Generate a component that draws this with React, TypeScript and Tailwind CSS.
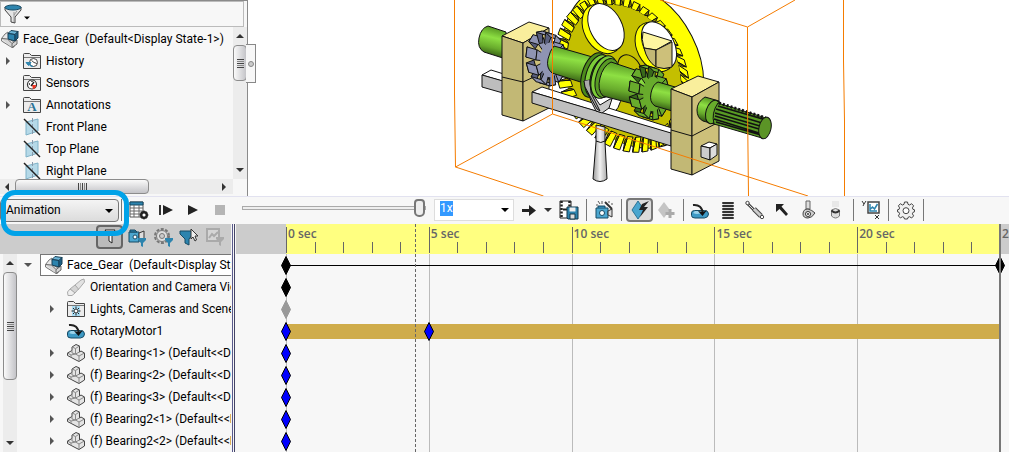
import type { ReactNode } from 'react';

interface TreeItem {
  label: string;
  icon: ReactNode;
  expandable?: boolean;
}

function AssemblyIcon() {
  return (
    <svg width="18" height="18" viewBox="0 0 18 18" className="shrink-0" strokeLinejoin="round">
      <path d="M.5 8.500 4 4l3-2 1 7 5 3v5l-2 .500L.5 11z" fill="#e8e8e8" stroke="#777" />
      <path d="m.5 8.500 6 .500 4.500 4.500v4M11 13.500l5-3.500v4l-5 3.500" fill="#d5d5d5" stroke="#666" />
      <path d="m7 3.500 3-3 7 1-3 3z" fill="#6cb4d6" stroke="#173f56" />
      <path d="M7 3.500l7 1V11l-7-2z" fill="#2d84ae" stroke="#173f56" />
      <path d="m14 4.500 3-3V8l-3 3z" fill="#1c5f84" stroke="#173f56" />
    </svg>
  );
}

function PartIcon() {
  return (
    <svg width="18" height="18" viewBox="0 0 18 18" className="shrink-0" fill="#e4e4e4" stroke="#444" strokeLinejoin="round">
      <path d="M.5 9 5 6.500V3L9 .5 12.500 2v6L14 7l3.500 2v5L12 17.500l-3-1.500-8.500-4.500z" />
      <path d="m5 3 3.500 1.500 4-2.500M8.500 4.500V10L12 12l5.500-3M8.500 10l4-2M5 6.500V9l3.500 1M.5 9l3.500 2v2.500M12 12v5.500M4 11l4.500-1" fill="none" stroke="#888" />
    </svg>
  );
}

function FolderIcon({ children }: { children: ReactNode }) {
  return (
    <svg width="18" height="18" viewBox="0 0 18 18" className="shrink-0">
      <path d="M.5 16.500v-14q0-1 1-1h5l2 2h9v13z" fill="#ececec" stroke="#444" />
      <path d="M1 5.500h16" stroke="#777" />
      {children}
    </svg>
  );
}

function HistoryIcon() {
  return (
    <FolderIcon>
      <circle cx="10.500" cy="10.500" r="4" fill="#fff" stroke="#444" />
      <path d="M11 10.500 8.500 8.500M11 10.500l3 1" stroke="#444" />
      <path d="M3 10.500h5l-2.500 3zM5.500 11Q7 15 10 14.500" fill="#2d84ae" stroke="#2d84ae" />
    </FolderIcon>
  );
}

function SensorsIcon() {
  return (
    <FolderIcon>
      <circle cx="9" cy="10.500" r="4.500" fill="#fff" stroke="#333" strokeWidth="1.200" />
      <path d="M9 11h4a4 4 0 0 1-3 4z" fill="#e32" />
      <path d="m8 12 3-4M6 10h1M9 7v1" stroke="#222" strokeWidth="1.400" />
    </FolderIcon>
  );
}

function AnnotationsIcon() {
  return (
    <FolderIcon>
      <text x="9" y="15" fontSize="13" fontWeight="700" textAnchor="middle" fill="#2a7397" fontFamily="Liberation Serif, serif">A</text>
    </FolderIcon>
  );
}

function LightsIcon() {
  return (
    <FolderIcon>
      <path d="M5 6h8v10H5z" fill="#a9dcf3" />
      <circle cx="9" cy="11" r="2" fill="#fff" stroke="#222" />
      <path d="M9 6.500v2M9 13.500v2M4.500 11h2M11.500 11h2M6 8l1 1M12 8l-1 1M6 14l1-1M12 14l-1-1" stroke="#222" />
    </FolderIcon>
  );
}

function PlaneIcon() {
  return (
    <svg width="18" height="18" viewBox="0 0 18 18" className="shrink-0">
      <path d="m3 4 12-3v12L3 17z" fill="#b5d9e8" stroke="#7fb2c8" />
      <path d="M9.500 0v18" stroke="#89a" strokeDasharray="4 2" />
      <path d="m1 1 16 16" stroke="#222" strokeWidth="1.500" />
    </svg>
  );
}

function CameraViewIcon() {
  return (
    <svg width="18" height="18" viewBox="0 0 18 18" className="shrink-0" fill="#e2e2e2" stroke="#aaa">
      <path d="m8 7 6-5 3-1 .5 3-6.500 8z" />
      <path d="m3 11 5-4 3.500 4L8 15z" fill="#d4d4d4" />
      <path d="m.5 14 2.500-3 5 4-3 2.500H1z" fill="#eee" />
    </svg>
  );
}

function MotorShape() {
  return (
    <>
      <path d="M.5 11q0-2.500 3-2.500h10q4 0 4 3.500t-4 4H4q-3.500 0-3.500-2.500z" fill="#3d9ac5" stroke="#174a64" />
      <path d="M2 11q4 2 8 0l2-2H4z" fill="#9bd3ea" />
      <path d="M2 3q9-1 10 9" fill="none" stroke="#222" strokeWidth="2" />
      <path d="m7 9 4.500 5L16 8l-4 2z" fill="#111" />
    </>
  );
}

function MotorIcon() {
  return (
    <svg width="18" height="18" viewBox="0 0 18 18" className="shrink-0">
      <MotorShape />
    </svg>
  );
}

function Funnel({ x = 0, y = 0, fill = '#2d84ae' }: { x?: number; y?: number; fill?: string }) {
  return <path transform={`translate(${x} ${y})`} d="M0 0h8v2L5 5v4L3 8V5L0 2z" fill={fill} />;
}

const FEATURES: TreeItem[] = [
  { label: 'History', icon: <HistoryIcon />, expandable: true },
  { label: 'Sensors', icon: <SensorsIcon /> },
  { label: 'Annotations', icon: <AnnotationsIcon />, expandable: true },
  { label: 'Front Plane', icon: <PlaneIcon /> },
  { label: 'Top Plane', icon: <PlaneIcon /> },
  { label: 'Right Plane', icon: <PlaneIcon /> },
];

const MOTION_ITEMS: TreeItem[] = [
  { label: 'Orientation and Camera Views', icon: <CameraViewIcon /> },
  { label: 'Lights, Cameras and Scene', icon: <LightsIcon />, expandable: true },
  { label: 'RotaryMotor1', icon: <MotorIcon /> },
  { label: '(f) Bearing<1> (Default<<Default>', icon: <PartIcon />, expandable: true },
  { label: '(f) Bearing<2> (Default<<Default>', icon: <PartIcon />, expandable: true },
  { label: '(f) Bearing<3> (Default<<Default>', icon: <PartIcon />, expandable: true },
  { label: '(f) Bearing2<1> (Default<<Default>', icon: <PartIcon />, expandable: true },
  { label: '(f) Bearing2<2> (Default<<Default>', icon: <PartIcon />, expandable: true },
];

function Arrow({ dir, className = '' }: { dir: 'up' | 'down' | 'left' | 'right'; className?: string }) {
  const paths = { up: 'M0 6 4 2l4 4z', down: 'M0 2h8L4 6z', left: 'M6 0v8L2 4z', right: 'M2 0v8l4-4z' };
  return (
    <svg width="8" height="8" viewBox="0 0 8 8" className={`shrink-0 ${className}`}>
      <path d={paths[dir]} fill="currentColor" />
    </svg>
  );
}

function TreeRow({ item }: { item: TreeItem }) {
  return (
    <li className="flex h-[22px] items-center whitespace-nowrap">
      <span className="flex w-[19px] shrink-0 text-[#555]">{item.expandable && <Arrow dir="right" />}</span>
      {item.icon}
      <span className="ml-[5px]">{item.label}</span>
    </li>
  );
}

function VScrollbar({ thumb }: { thumb: string }) {
  return (
    <div aria-hidden="true" className="flex w-[14px] shrink-0 flex-col items-center bg-[#ececec] text-[#333]">
      <Arrow dir="up" className="my-[5px]" />
      <div className={`flex w-full flex-col items-center justify-center gap-px rounded-sm border border-[#8c8c8c] bg-linear-to-r from-[#fafafa] to-[#c4c4c8] ${thumb}`}>
        <span className="h-px w-[7px] bg-[#444]" />
        <span className="h-px w-[7px] bg-[#888]" />
        <span className="h-px w-[7px] bg-[#444]" />
        <span className="h-px w-[7px] bg-[#888]" />
        <span className="h-px w-[7px] bg-[#444]" />
      </div>
      <Arrow dir="down" className="mt-auto mb-[5px]" />
    </div>
  );
}

function FeatureTree() {
  return (
    <aside className="relative flex w-[248px] shrink-0 flex-col border-t border-r border-[#8a8a8a] bg-[#f7f7f7]">
      <div className="mr-[3px] flex h-[26px] items-center border border-[#bbb] pl-[3px]">
        <button type="button" aria-label="Filter" className="flex items-center gap-px">
          <svg width="18" height="20" viewBox="0 0 18 20">
            <path d="M1 3v3l6 7v5l4 1v-6l6-7V3z" fill="#e5e5e5" stroke="#444" />
            <ellipse cx="9" cy="3.500" rx="8" ry="2.500" fill="#2d84ae" stroke="#174a64" />
            <path d="M10 8v10M13 7l-3 4" stroke="#999" />
          </svg>
          <Arrow dir="down" className="mt-2 scale-75" />
        </button>
      </div>
      <div className="flex h-[152px] overflow-hidden">
        <div className="min-w-0 flex-1 overflow-hidden pt-px">
          <div className="flex h-[22px] items-center gap-1 whitespace-nowrap pl-px">
            <AssemblyIcon />
            <span className="whitespace-pre">Face_Gear  (Default&lt;Display State-1&gt;)</span>
          </div>
          <ul className="pl-1">
            {FEATURES.map((f) => (
              <TreeRow key={f.label} item={f} />
            ))}
          </ul>
        </div>
        <VScrollbar thumb="h-[36px]" />
      </div>
      <div aria-hidden="true" className="mr-[14px] flex h-[15px] items-center bg-[#ececec] text-[#333]">
        <Arrow dir="left" className="mx-[3px]" />
        <div className="ml-px flex h-full w-[134px] items-center justify-center gap-px rounded-sm border border-[#8c8c8c] bg-linear-to-b from-[#fafafa] to-[#c4c4c8]">
          <span className="h-[7px] w-px bg-[#444]" />
          <span className="h-[7px] w-px bg-[#888]" />
          <span className="h-[7px] w-px bg-[#444]" />
          <span className="h-[7px] w-px bg-[#888]" />
          <span className="h-[7px] w-px bg-[#444]" />
        </div>
        <Arrow dir="right" className="mr-[5px] ml-auto" />
      </div>
      <button type="button" aria-label="Collapse panel" className="absolute top-[43px] -right-[9px] flex h-[39px] w-[10px] items-center justify-center border border-l-0 border-[#888] bg-[#f7f7f7]">
        <span className="size-[6px] rounded-full border border-[#888] bg-[#ccc]" />
      </button>
    </aside>
  );
}

// point on the tilted ellipse that the gear's circles project to
function ring(cx: number, cy: number, s: number, t: number) {
  const u = 91 * s * Math.cos(t);
  const v = 70 * s * Math.sin(t);
  return `${(cx + 0.456 * u - 0.89 * v).toFixed(1)},${(cy + 0.89 * u + 0.456 * v).toFixed(1)}`;
}

function FaceGear() {
  const count = 44;
  const step = (Math.PI * 2) / count;
  return (
    <g stroke="#111" strokeLinejoin="round">
      <ellipse cx="633" cy="66" rx="86" ry="66" transform="rotate(62.9 633 66)" fill="#ffff00" />
      <ellipse cx="624" cy="72" rx="76" ry="58" transform="rotate(62.9 624 72)" fill="#c4bf00" stroke="none" />
      {Array.from({ length: count }, (_, i) => {
        const t = i * step;
        return (
          <g key={i}>
            <polygon points={[ring(624, 71, 0.76, t), ring(622, 74, 0.9, t + 0.05), ring(622, 74, 0.9, t + 0.05 + step * 0.65), ring(624, 71, 0.76, t + step * 0.65)].join(' ')} fill="#ffff00" />
            <polygon points={[ring(624, 71, 0.76, t + step * 0.65), ring(622, 74, 0.9, t + 0.05 + step * 0.65), ring(624, 72, 0.8, t + step)].join(' ')} fill="#8f8b00" />
          </g>
        );
      })}
      <ellipse cx="625" cy="70" rx="68" ry="52" transform="rotate(62.9 625 70)" fill="#c4bf00" stroke="none" />
      <ellipse cx="602" cy="29" rx="26" ry="18" transform="rotate(62.9 602 29)" fill="#ffff00" />
      <ellipse cx="606" cy="27" rx="25" ry="16" transform="rotate(62.9 606 27)" fill="#fff" />
      <ellipse cx="655" cy="47" rx="26" ry="18" transform="rotate(62.9 655 47)" fill="#ffff00" />
      <ellipse cx="659" cy="45" rx="25" ry="15" transform="rotate(62.9 659 45)" fill="#fff" />
      <path d="m643 32 29 9-16 9-12-2q-3-9-1-16z" fill="#fdf5a0" />
      <path d="m644 48 12 2v17q-9-6-12-19z" fill="#c2b875" />
      <path d="m656 50 16-8v25q-8 3-16 0z" fill="#cdc07a" />
      <ellipse cx="630" cy="70" rx="16" ry="11" transform="rotate(62.9 630 70)" fill="none" />
      <path d="M586 75q-3 20 14 36l10 5q10-6 12-22z" fill="#fff" />
    </g>
  );
}

function Pinion({ cx, cy, r, fill, dark }: { cx: number; cy: number; r: number; fill: string; dark: string }) {
  const teeth = 10;
  return (
    <g stroke="#111" strokeLinejoin="round">
      {Array.from({ length: teeth }, (_, i) => {
        const t = (i * Math.PI * 2) / teeth + 0.2;
        const at = (radius: number, d: number, dx: number, dy: number) =>
          `${(cx + dx + radius * 0.58 * Math.cos(t + d)).toFixed(1)},${(cy + dy + radius * Math.sin(t + d)).toFixed(1)}`;
        return (
          <g key={i}>
            <polygon points={[at(r * 0.55, -0.22, -5, -2), at(r, -0.2, -6, -2), at(r, 0.2, -6, -2), at(r * 0.55, 0.22, -5, -2)].join(' ')} fill={dark} />
            <polygon points={[at(r, -0.2, -6, -2), at(r, 0.2, -6, -2), at(r, 0.2, 4, 1), at(r, -0.2, 4, 1)].join(' ')} fill={fill} />
            <polygon points={[at(r * 0.5, -0.26, 4, 1), at(r, -0.2, 4, 1), at(r, 0.2, 4, 1), at(r * 0.5, 0.26, 4, 1)].join(' ')} fill={fill} />
          </g>
        );
      })}
      <ellipse cx={cx + 3} cy={cy + 1} rx={r * 0.38} ry={r * 0.66} fill={fill} stroke="none" />
    </g>
  );
}

function ModelView() {
  return (
    <svg viewBox="248 0 761 196" preserveAspectRatio="xMidYMid meet" role="img" aria-label="Face gear assembly" className="min-w-0 flex-1 bg-white">
      <defs>
        <linearGradient id="shaftEnd" x1="0.6" y1="0" x2="0.4" y2="1">
          <stop offset="0" stopColor="#4d8b1c" />
          <stop offset="0.35" stopColor="#8ee043" />
          <stop offset="0.65" stopColor="#68ab2c" />
          <stop offset="1" stopColor="#1f3a0a" />
        </linearGradient>
        <linearGradient id="post">
          <stop offset="0" stopColor="#999" />
          <stop offset="0.5" stopColor="#f2f2f2" />
          <stop offset="1" stopColor="#aaa" />
        </linearGradient>
      </defs>

      <FaceGear />

      <g stroke="#111" strokeLinejoin="round">
        <path d="m482 75 9-5 16 5-5 6z" fill="#fff" />
        <path d="m482 75 21 6v12l-21-6z" fill="#bdbdbd" />
        <path d="m488 26 18 6v27l-22-7q-7-4-5-14t9-12z" fill="url(#shaftEnd)" />
        <path d="m502 36 27-14 20 6-26 15z" fill="#f9ee9c" />
        <path d="m502 36 21 7v78l-21-6z" fill="#c2b875" />
        <path d="m523 43 26-15v80l-26 13z" fill="#cdc07a" />
        <path d="m502 77 21 5 26-12" fill="none" />
      </g>

      <Pinion cx={547} cy={59} r={26} fill="#8f94b3" dark="#595e7c" />

      <g stroke="#111" strokeLinejoin="round">
        <path d="m532 92 10-5 130 41v6z" fill="#fff" />
        <path d="m532 92 139 41v13L532 103z" fill="#bfbfbf" />
        <path d="m554 46 42 12-6 27-38-12q-6-5-4-14t6-13z" fill="url(#shaftEnd)" />
        <path d="M596 125v17l-3 37q7 5 14 0l-2-37v-15z" fill="url(#post)" />
        <path d="M596 141q5 3 9 0" fill="none" />
        <ellipse cx="594" cy="75" rx="12" ry="23" transform="rotate(17 594 75)" fill="#4d8b1c" />
        <ellipse cx="598" cy="76" rx="12" ry="22" transform="rotate(17 598 76)" fill="#7ccc38" />
        <path d="m584 81 6-1 2 13 8 12 10-6 2 0-3 9-7 5-6-2-5-10z" fill="#c9c9c9" />
        <path d="m584 81 1 6 12 22 3 2-9-18-1-13" fill="#aaa" />
        <ellipse cx="601" cy="76" rx="10" ry="19" transform="rotate(17 601 76)" fill="#2f5c10" />
        <ellipse cx="604" cy="77" rx="12" ry="22" transform="rotate(17 604 77)" fill="#7ccc38" />
        <ellipse cx="607" cy="78" rx="11" ry="20" transform="rotate(17 607 78)" fill="#589a24" />
        <path d="m611 62 42 14-8 31-42-11q-6-6-3-18t11-16z" fill="url(#shaftEnd)" />
      </g>

      <Pinion cx={650} cy={93} r={26} fill="#68ab2c" dark="#39691a" />

      <g stroke="#111" strokeLinejoin="round">
        <path d="m658 82 24 7-3 24-24-7q-6-4-4-13t7-11z" fill="url(#shaftEnd)" />
        <path d="m671 89 27-13 21 6-27 15z" fill="#f9ee9c" />
        <path d="m671 89 21 8v78l-21-6z" fill="#c2b875" />
        <path d="m692 97 27-15v79l-27 14z" fill="#cdc07a" />
        <path d="m671 130 21 6 27-14" fill="none" />
        <path d="m701 146 8-4 8 2-7 4z" fill="#fff" />
        <path d="m701 146 9 2v12l-9-3z" fill="#ccc" />
        <path d="m710 148 7-4v11l-7 5z" fill="#ddd" />
        <path d="m705 97 14 4-5 23-11-3q-6-3-6-11t8-13z" fill="url(#shaftEnd)" />
        <ellipse cx="713" cy="112" rx="7" ry="12" transform="rotate(17 713 112)" fill="#68ab2c" />
        <path d="m718 103 48 15-4 20-48-14q-3-11 4-21z" fill="#589a24" />
        <path d="m718 106 48 14M716 109l46 14M715 113l45 13M715 116l44 13M714 119l45 14M716 122l45 13" fill="none" strokeWidth="1.600" />
        <path d="m719 103 47 15" strokeWidth="3" strokeDasharray="2 2" />
        <ellipse cx="765" cy="128" rx="6" ry="11" transform="rotate(12 765 128)" fill="#5b9426" />
      </g>

      <g fill="none" stroke="#f57c00">
        <path d="M454.500 0v94l1 73 97-53V0M455.500 167l88 29M552.500 114 808 196M660 0l87.500 27L795 0M747.500 27v80l1 89M843.500 0v61l1 60v75" />
      </g>
    </svg>
  );
}

function ToolButton({ label, children }: { label: string; children: ReactNode }) {
  return (
    <button type="button" aria-label={label} className="flex h-[25px] w-[26px] shrink-0 items-center justify-center">
      <svg width="20" height="20" viewBox="0 0 20 20">
        {children}
      </svg>
    </button>
  );
}

function Separator() {
  return <span className="mx-1 h-[22px] w-px shrink-0 bg-[#777]" />;
}

function MotionToolbar() {
  return (
    <div className="flex h-7 items-center border-t border-[#e2e2f0] bg-[#f7f7f7] pb-px">
      <div className="relative w-[119px] shrink-0">
        <select aria-label="Study type" className="h-[23px] w-full appearance-none rounded-sm border border-[#777] bg-linear-to-b from-[#f4f4f4] to-[#dcdcdc] pl-[5px]">
          <option>Animation</option>
        </select>
        <Arrow dir="down" className="pointer-events-none absolute top-2 right-[6px]" />
      </div>
      <span className="ml-[2px] h-[22px] w-px shrink-0 bg-[#777]" />
      <div className="ml-1 flex">
        <ToolButton label="Calculate">
          <path d="M1 2h13v15H1z" fill="#fff" stroke="#555" />
          <path d="M1 2h13v3H1z" fill="#2d84ae" stroke="#174a64" />
          <path d="M1 8h13M1 11h13M1 14h13M5 5v12M10 5v12" stroke="#666" />
          <circle cx="15" cy="15" r="3" fill="#f7f7f7" stroke="#222" strokeWidth="2" />
          <path d="M15 10.500v9M10.500 15h9M12 12l6 6M18 12l-6 6" stroke="#222" strokeWidth="1.200" />
          <circle cx="15" cy="15" r="1.500" fill="#fff" />
        </ToolButton>
        <ToolButton label="Play from start">
          <path d="M5 5v10" stroke="#333" strokeWidth="2" />
          <path d="m8 5 10 5-10 5z" fill="#222" />
        </ToolButton>
        <ToolButton label="Play">
          <path d="m7 5 10 5-10 5z" fill="#222" />
        </ToolButton>
        <ToolButton label="Stop">
          <path d="M8 5h10v10H8z" fill="#b5b5b5" />
        </ToolButton>
      </div>
      <input
        type="range"
        aria-label="Playback position"
        defaultValue={100}
        className="mr-2 mb-[5px] ml-3 h-[18px] w-[184px] shrink-0 appearance-none bg-transparent [&::-webkit-slider-runnable-track]:h-[4px] [&::-webkit-slider-runnable-track]:border [&::-webkit-slider-runnable-track]:border-[#aaa] [&::-webkit-slider-runnable-track]:bg-[#eee] [&::-webkit-slider-thumb]:-mt-2 [&::-webkit-slider-thumb]:h-[18px] [&::-webkit-slider-thumb]:w-[11px] [&::-webkit-slider-thumb]:appearance-none [&::-webkit-slider-thumb]:rounded-t-sm [&::-webkit-slider-thumb]:rounded-b-[5px] [&::-webkit-slider-thumb]:border-2 [&::-webkit-slider-thumb]:border-[#777] [&::-webkit-slider-thumb]:bg-[#eee]"
      />
      <div className="flex h-[22px] w-[80px] shrink-0 items-center border border-[#ddd] bg-white pr-1 pl-[5px]">
        <input aria-label="Playback speed" defaultValue="1x" className="mb-1 h-[15px] w-[13px] bg-[#3399ff] text-white outline-none" />
        <button type="button" aria-label="Speed list" className="ml-auto">
          <Arrow dir="down" />
        </button>
      </div>
      <div className="ml-[2px] flex items-center">
        <ToolButton label="Playback mode">
          <path d="M3 9h7V5l7 5.500-7 5.500v-4H3z" fill="#222" />
        </ToolButton>
        <Arrow dir="down" className="mr-1 ml-[2px] text-[#333]" />
        <ToolButton label="Save animation">
          <path d="M1 1h11v17H1z" fill="#fff" stroke="#222" />
          <path d="M2.500 1v17M10.500 1v17" stroke="#222" strokeWidth="2.500" strokeDasharray="2 1.500" />
          <path d="M4 9.500h5" stroke="#222" strokeWidth="2" />
          <path d="M8 7h11v12H9l-1-1z" fill="#2d84ae" stroke="#17384a" />
          <path d="M10.500 7.500h6v4h-6z" fill="#eee" />
          <path d="M11 14h5v5h-5z" fill="#ddd" stroke="#17384a" />
        </ToolButton>
        <Separator />
        <ToolButton label="Animation wizard">
          <path d="M2 8h12v10H2z" fill="#4ba6cf" stroke="#174a64" />
          <path d="m14 11 4-2v8l-4-2z" fill="#ddd" stroke="#333" />
          <path d="M4 8V6h7v2" fill="#2d84ae" stroke="#174a64" />
          <circle cx="8" cy="13" r="2.500" fill="#fff" stroke="#174a64" />
          <path d="m11 2 7 7" stroke="#333" strokeWidth="2" />
          <path d="M4 1l2 3M8 1v3M15 1v2M2 5h2M17 4h2" stroke="#555" />
        </ToolButton>
        <Separator />
        <button type="button" aria-label="Auto key" aria-pressed="true" className="flex h-6 w-[27px] shrink-0 items-center justify-center rounded-sm border-2 border-[#777] bg-[#dcdcdc]">
          <svg width="20" height="20" viewBox="0 0 20 20">
            <path d="m8 1 6 9-6 9-6-9z" fill="#4ba6cf" stroke="#2d7396" />
            <path d="m19 1-7 3-3 6h4l-3 7 8-10h-4z" fill="#222" />
          </svg>
        </button>
        <ToolButton label="Add key">
          <path d="m8 2 6 8-6 8-6-8z" fill="#c4c4c4" />
          <path d="M14 9v9M9.500 13.500h9" stroke="#aaa" strokeWidth="3" />
        </ToolButton>
        <Separator />
      </div>
      <div className="flex items-center gap-px">
        <ToolButton label="Motor">
          <g transform="translate(0 2)">
            <MotorShape />
          </g>
        </ToolButton>
        <ToolButton label="Spring">
          <path d="M5 3h10M5 6h10M5 9h10M5 12h10M5 15h10M5 18h10" stroke="#333" strokeWidth="2" strokeLinecap="round" />
          <path d="M5 4.500h10M5 7.500h10M5 10.500h10M5 13.500h10M5 16.500h10" stroke="#ddd" />
        </ToolButton>
        <ToolButton label="Damper">
          <path d="m2 3 8 8" stroke="#444" strokeWidth="3" />
          <path d="m3 4 6 6" stroke="#ddd" />
          <path d="m9 9 7 7" stroke="#444" strokeWidth="5" />
          <path d="m9 9 7 7" stroke="#ccc" strokeWidth="3" />
          <circle cx="2.500" cy="3" r="1.700" fill="#fff" stroke="#444" />
          <circle cx="17" cy="17" r="1.700" fill="#fff" stroke="#444" />
        </ToolButton>
        <ToolButton label="Force">
          <path d="M4 4h8L9.500 6.500 16 14l-2 2-6.500-7L4 12z" fill="#222" />
        </ToolButton>
        <ToolButton label="Contact">
          <path d="M7 1h4v8H7z" fill="#ddd" stroke="#666" />
          <path d="M4 14q0-5 5-5 4 1 7 4-3 5-7 5-5 0-5-4z" fill="#ccc" stroke="#444" />
          <circle cx="9" cy="14" r="2.500" fill="#fff" stroke="#333" />
          <circle cx="9" cy="14" r="1" fill="#333" />
        </ToolButton>
        <ToolButton label="Gravity">
          <path d="M6 1h7v6H6z" fill="#e8e8e8" />
          <path d="M5.500 10q4-3 8 0v6q-4 4-8 0z" fill="#ddd" stroke="#777" />
          <path d="M5.500 10.500q4 4 8 0" fill="none" stroke="#333" strokeWidth="2" />
        </ToolButton>
      </div>
      <Separator />
      <ToolButton label="Results and plots">
        <path d="M7 2h11v11H7z" fill="#fff" stroke="#444" strokeWidth="1.500" />
        <path d="M9 4v7h7M9.500 9l2-2 2 2 3-5" fill="none" stroke="#2d84ae" strokeWidth="1.500" />
        <path d="m1 1 2 3 2-3M3 4 2 6M14 15l4 4M18 15l-4 4" fill="none" stroke="#333" />
      </ToolButton>
      <Separator />
      <ToolButton label="Motion study properties">
        <path d="M8.500 2h3l.5 2.300 1.600.7 2-1.300 2 2.100L16.400 7.900l.6 1.500 1.500.400v2l-1.500.500-.6 1.500 1.200 2.100-2 2.100-2-1.300-1.600.7-.5 1.600h-3L8 17.400l-1.600-.7-2 1.300-2-2.100 1.200-2.100L3 12.300l-1.500-.500v-2L3 9.400l.6-1.500-1.200-2.100 2-2.100 2 1.300L8 4.300z" fill="#f0f0f0" stroke="#444" />
        <circle cx="10" cy="10.700" r="3" fill="#fff" stroke="#444" />
      </ToolButton>
      <Separator />
    </div>
  );
}

function MotionTree() {
  return (
    <div className="flex w-[231px] shrink-0 flex-col">
      <div className="flex h-[30px] items-center bg-[#ccc] pb-1 pl-[96px]">
        <button type="button" aria-label="No filter" aria-pressed="true" className="flex h-6 w-[27px] items-center justify-center rounded-sm border-2 border-[#666] bg-[#bbb]">
          <svg width="12" height="16" viewBox="0 0 12 16">
            <path d="M1 1h10L8 7v7l-3-2V7z" fill="#fff" stroke="#222" />
          </svg>
        </button>
        <div className="ml-px flex">
          <ToolButton label="Filter animated">
            <path d="M2 5h10v10H2z" fill="#4ba6cf" stroke="#174a64" />
            <path d="M3 5V3h5l2 2z" fill="#2d84ae" stroke="#174a64" />
            <path d="m12 6 5-2v8l-5 2z" fill="#ddd" stroke="#333" />
            <circle cx="8" cy="10" r="2" fill="#fff" stroke="#174a64" />
            <Funnel x={11} y={11} />
          </ToolButton>
          <ToolButton label="Filter driving">
            <circle cx="9" cy="9" r="7" fill="#ccc" stroke="#777" strokeWidth="2" strokeDasharray="3 1.500" />
            <circle cx="9" cy="9" r="5.500" fill="#ddd" stroke="#777" />
            <circle cx="9" cy="9" r="2.500" fill="#ccc" stroke="#777" />
            <Funnel x={12} y={11} />
          </ToolButton>
          <ToolButton label="Filter selected">
            <path d="M1 4h13v3l-4 5v6l-4-2v-4L1 7z" fill="#2d84ae" stroke="#174a64" />
            <path d="M12 2v10l2-2 2 4 1.500-1-1.500-4h3z" fill="#eee" stroke="#333" />
          </ToolButton>
          <ToolButton label="Filter results">
            <path d="M2 2h12v12H2z" fill="#d5d5d5" stroke="#aaa" strokeWidth="2" />
            <path d="m4 11 3-4 2 2 4-4" fill="none" stroke="#aaa" strokeWidth="2" />
            <Funnel x={11} y={10} fill="#aaa" />
          </ToolButton>
        </div>
      </div>
      <div className="flex h-[198px] overflow-hidden bg-[#f7f7f7] pl-[3px]">
        <VScrollbar thumb="h-[108px]" />
        <div className="min-w-0 flex-1 overflow-hidden">
          <div className="flex h-[22px] items-center pl-[7px]">
            <Arrow dir="down" className="text-[#555]" />
            <div className="ml-2 flex h-[22px] min-w-0 flex-1 items-center gap-1 whitespace-nowrap border border-r-0 border-[#777] bg-white pl-1">
              <AssemblyIcon />
              <span className="whitespace-pre">Face_Gear  (Default&lt;Display State-1&gt;)</span>
            </div>
          </div>
          <ul className="pl-[31px]">
            {MOTION_ITEMS.map((item) => (
              <TreeRow key={item.label} item={item} />
            ))}
          </ul>
        </div>
      </div>
    </div>
  );
}

interface Track {
  keys: { at: number; color: string; border?: string }[];
  bar?: 'line' | 'solid';
}

const BLUE = '#0000ff';

const TRACKS: Track[] = [
  { keys: [{ at: 0, color: '#000' }, { at: 25, color: '#000' }], bar: 'line' },
  { keys: [{ at: 0, color: '#000' }] },
  { keys: [{ at: 0, color: '#999', border: '#999' }] },
  { keys: [{ at: 0, color: BLUE }, { at: 5, color: BLUE }], bar: 'solid' },
  { keys: [{ at: 0, color: BLUE }] },
  { keys: [{ at: 0, color: BLUE }] },
  { keys: [{ at: 0, color: BLUE }] },
  { keys: [{ at: 0, color: BLUE }] },
  { keys: [{ at: 0, color: BLUE }] },
];

const DURATION = 25;

function Timeline() {
  return (
    <div className="relative min-w-0 flex-1 overflow-hidden bg-[#f7f7f7]">
      <div className="flex h-[30px] overflow-hidden bg-[#ccc] font-['Open_Sans','Noto_Sans',sans-serif] font-semibold text-[#666]">
        <div className="w-[50px] shrink-0" />
        <div className="flex flex-1 bg-[#ffff80]">
          {[0, 5, 10, 15, 20].map((sec) => (
            <div key={sec} className="flex flex-1 flex-col pt-[3px]">
              <div className="flex h-[26px] flex-col justify-between border-l border-[#666]">
                <span className="pl-px leading-[14px]">{sec} sec</span>
                <div className="flex h-[11px]">
                  <span className="flex-1" />
                  <span className="flex-1 border-l border-[#666]" />
                  <span className="flex-1 border-l border-[#666]" />
                  <span className="flex-1 border-l border-[#666]" />
                  <span className="flex-1 border-l border-[#666]" />
                </div>
              </div>
            </div>
          ))}
        </div>
        <div className="w-[9px] shrink-0 overflow-hidden pt-[3px] pl-[2px] leading-[14px] whitespace-nowrap">25 sec</div>
      </div>

      <div className="relative">
        <div className="absolute inset-y-0 right-[9px] left-[50px] flex">
          {[0, 5, 10, 15, 20].map((sec) => (
            <span key={sec} className="flex-1 border-l border-[#bbb]" />
          ))}
        </div>
        {TRACKS.map((track, i) => (
          <div key={i} className="flex h-[22px] pr-[9px] pl-[50px]">
            <div className="relative flex flex-1 items-center">
              {track.bar === 'line' && <span className="h-px flex-1 bg-black" />}
              {track.bar === 'solid' && <span className="h-[15px] flex-1 bg-[#cfac4b]" />}
              {track.keys.map((key) => (
                <svg key={key.at} width="10" height="20" viewBox="0 0 10 20" className="absolute top-[2px] -ml-[5px]" style={{ left: `${(key.at / DURATION) * 100}%` }}>
                  <path d="m5 .5 4.500 9L5 18.500.5 9.500z" fill={key.color} stroke={key.border ?? '#000'} />
                </svg>
              ))}
            </div>
          </div>
        ))}
      </div>

      <div className="pointer-events-none absolute inset-y-0 right-[9px] left-[50px]">
        <span className="absolute inset-y-0 left-[18%] border-l border-dashed border-[#666]" />
        <span className="absolute inset-y-0 -right-px w-[2px] bg-[#777]" />
      </div>
    </div>
  );
}

export default function App() {
  return (
    <div className="flex flex-col overflow-hidden bg-white font-[Roboto,'Open_Sans',sans-serif] text-[12px] leading-4 text-black">
      <div className="flex h-[196px]">
        <FeatureTree />
        <ModelView />
      </div>
      <div className="relative">
        <MotionToolbar />
        <div className="flex overflow-hidden">
          <MotionTree />
          <div className="flex w-[5px] shrink-0 cursor-col-resize justify-center gap-px bg-[#f7f7f7]">
            <span className="w-px bg-[#5a5a8c]" />
            <span className="w-px bg-[#444466]" />
          </div>
          <Timeline />
        </div>
        <div className="pointer-events-none absolute -top-[6px] left-px h-[46px] w-[128px] rounded-[14px] border-[5px] border-[#00a2e8]" />
      </div>
    </div>
  );
}
